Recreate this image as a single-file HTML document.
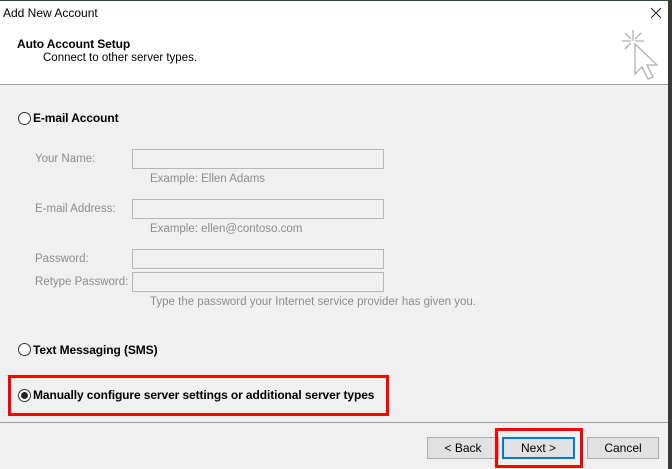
<!DOCTYPE html>
<html><head><style>
body{margin:0;width:672px;height:469px;position:relative;overflow:hidden;background:#f0f0f0;font-family:"Liberation Sans",sans-serif;font-size:11.5px;color:#000}
.a{position:absolute}
.lbl{color:#8c8c8c;font-size:11.5px}
.inp{position:absolute;left:132px;width:250px;height:18px;border:1px solid #b5b5b5;background:#f0f0f0}
.rad{position:absolute;width:11px;height:11px;border:1px solid #333;border-radius:50%;background:#fff}
.b{font-weight:bold;font-size:12px;color:#000;letter-spacing:-0.1px}
.btn{position:absolute;top:437px;height:20px;width:70px;border:1px solid #adadad;background:#e1e1e1;text-align:center;line-height:20px;font-size:12px}
</style></head><body>
<div class="a" style="left:0;top:0;width:668px;height:84px;background:#fff;border-bottom:1px solid #a0a0a0"></div>
<div class="a" style="left:0;top:0;width:672px;height:1px;background:#2a4a4a"></div>
<div class="a" style="left:668px;top:0;width:4px;height:469px;background:#3a3a35"></div>
<div class="a" style="left:3px;top:6px;font-size:12px">Add New Account</div>
<svg class="a" style="left:650px;top:7px" width="12" height="12" viewBox="0 0 12 12" stroke="#222" stroke-width="1"><path d="M1 1l10 10M11 1L1 11"/></svg>
<div class="a b" style="left:17px;top:37px">Auto Account Setup</div>
<div class="a" style="left:43px;top:52px;font-size:11.5px">Connect to other server types.</div>
<svg class="a" style="left:620px;top:28px" width="44" height="54" viewBox="0 0 44 54" fill="none" stroke="#b0b0b0" stroke-width="1.3">
<path d="M13 2v11M2 13h9M15 13h9M5 5l6 6M21 5l-6 6M5 21l6-6"/>
<path d="M15 16v30l7-7 6 12 5-2-6-12h10z" fill="#fff"/></svg>
<div class="rad" style="left:18px;top:112px"></div>
<div class="a b" style="left:33px;top:111px">E-mail Account</div>
<div class="a lbl" style="left:35px;top:153px">Your Name:</div>
<div class="inp" style="top:149px"></div>
<div class="a lbl" style="left:150px;top:173px">Example: Ellen Adams</div>
<div class="a lbl" style="left:35px;top:203px">E-mail Address:</div>
<div class="inp" style="top:199px"></div>
<div class="a lbl" style="left:150px;top:223px">Example: ellen@contoso.com</div>
<div class="a lbl" style="left:35px;top:253px">Password:</div>
<div class="inp" style="top:249px"></div>
<div class="a lbl" style="left:35px;top:276px">Retype Password:</div>
<div class="inp" style="top:272px"></div>
<div class="a lbl" style="left:150px;top:296px">Type the password your Internet service provider has given you.</div>
<div class="rad" style="left:18px;top:343px"></div>
<div class="a b" style="left:33px;top:343px">Text Messaging (SMS)</div>
<div class="a" style="left:8px;top:375px;width:375px;height:35px;border:3px solid #f00"></div>
<div class="rad" style="left:18px;top:389px"></div>
<div class="a" style="left:21px;top:392px;width:7px;height:7px;border-radius:50%;background:#222"></div>
<div class="a b" style="left:33px;top:388px">Manually configure server settings or additional server types</div>
<div class="a" style="left:0;top:422px;width:668px;height:1px;background:#a0a0a0"></div>
<div class="btn" style="left:427px">&lt; Back</div>
<div class="btn" style="left:502px;border:2px solid #0078d7;width:69px;height:18px;line-height:18px">Next &gt;</div>
<div class="btn" style="left:587px">Cancel</div>
<div class="a" style="left:495px;top:428px;width:82px;height:34px;border:3px solid #f00"></div>
</body></html>
